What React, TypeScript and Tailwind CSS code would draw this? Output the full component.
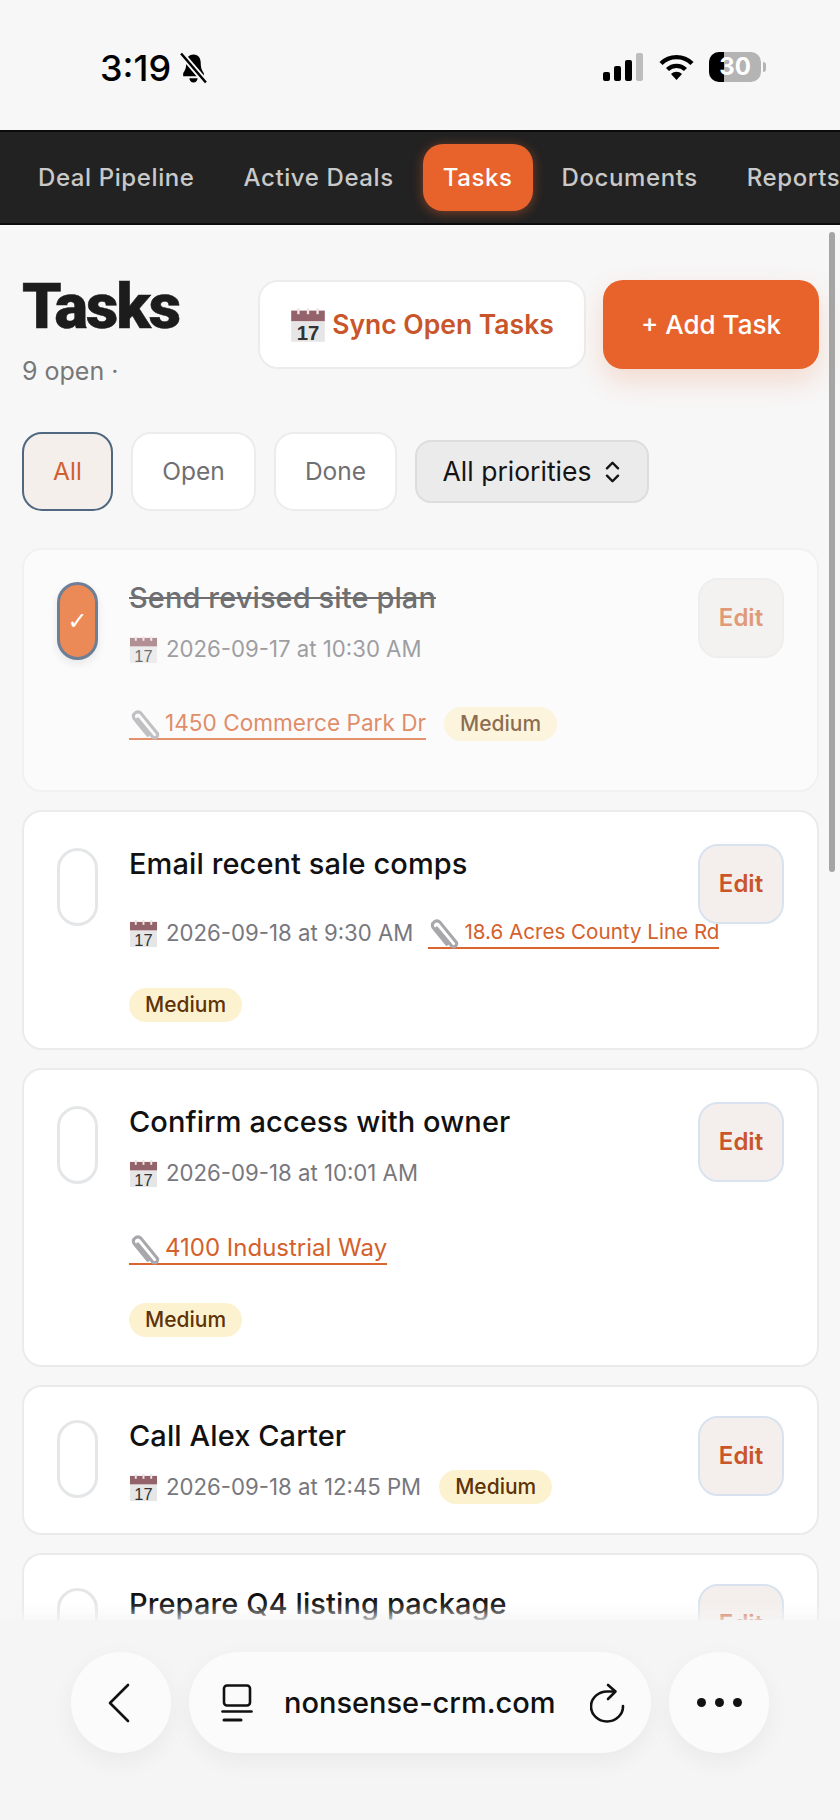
import React from "react";

function CalendarIcon({ large = false }: { large?: boolean }) {
  return (
    <svg viewBox="0 0 30 30" className={large ? "h-[36px] w-[36px] shrink-0" : "h-[29px] w-[29px] shrink-0"}>
      <rect x="1" y="3" width="28" height="9" fill="#94626a" />
      <rect x="1" y="12" width="28" height="17" fill="#e6e6e6" />
      <rect x="6" y="1" width="2" height="5" fill="#efe4e4" />
      <rect x="14" y="1" width="2" height="5" fill="#efe4e4" />
      <rect x="22" y="1" width="2" height="5" fill="#efe4e4" />
      <text x="15" y="27.5" textAnchor="middle" fontSize="17" fontFamily="Liberation Sans, sans-serif" fill="#333">
        17
      </text>
    </svg>
  );
}

function ClipIcon() {
  return (
    <svg viewBox="0 0 30 30" className="mt-[4px] h-[33px] w-[33px] shrink-0" fill="none">
      <path
        d="M8 9 L22 26 a3 3 0 0 0 4-3.5 L11 4 a4 4 0 0 0-6.5 4.5 L17 24"
        stroke="#a8a8ac"
        strokeWidth="2.8"
        strokeLinecap="round"
      />
    </svg>
  );
}

function Medium() {
  return (
    <span className="rounded-full bg-[#fdf2cf] px-[16px] py-[3px] text-[21px] leading-[28px] font-medium text-[#5f3208]">
      Medium
    </span>
  );
}

function DateText({ children }: { children: string }) {
  return (
    <span className="flex items-center gap-2 text-[22.2px] leading-[36px] whitespace-nowrap text-[#77777d]">
      <CalendarIcon />
      {children}
    </span>
  );
}

function PropLink({ children, size }: { children: string; size: string }) {
  return (
    <a className={`flex h-[32px] items-center gap-[3px] border-b-2 border-[#d9652f] whitespace-nowrap text-[#d4602c] ${size}`}>
      <ClipIcon />
      {children}
    </a>
  );
}

type Task = {
  title: string;
  done?: boolean;
  height: string;
  top: string;
  rows: React.ReactNode;
};

const tasks: Task[] = [
  {
    title: "Send revised site plan",
    done: true,
    height: "h-[244px]",
    top: "pt-[28px]",
    rows: (
      <>
        <div className="mt-[15px] flex">
          <DateText>2026-09-17 at 10:30 AM</DateText>
        </div>
        <div className="mt-[40px] flex items-center gap-[18px]">
          <PropLink size="text-[22.6px]">1450 Commerce Park Dr</PropLink>
          <Medium />
        </div>
      </>
    ),
  },
  {
    title: "Email recent sale comps",
    height: "h-[240px]",
    top: "pt-[32px]",
    rows: (
      <>
        <div className="mt-[33px] flex items-center gap-[15px]">
          <DateText>2026-09-18 at 9:30 AM</DateText>
          <PropLink size="text-[20.6px]">18.6 Acres County Line Rd</PropLink>
        </div>
        <div className="mt-[37px] flex">
          <Medium />
        </div>
      </>
    ),
  },
  {
    title: "Confirm access with owner",
    height: "h-[299px]",
    top: "pt-[32px]",
    rows: (
      <>
        <div className="mt-[15px] flex">
          <DateText>2026-09-18 at 10:01 AM</DateText>
        </div>
        <div className="mt-[42px] flex">
          <PropLink size="text-[24px]">4100 Industrial Way</PropLink>
        </div>
        <div className="mt-[38px] flex">
          <Medium />
        </div>
      </>
    ),
  },
  {
    title: "Call Alex Carter",
    height: "h-[150px]",
    top: "pt-[29px]",
    rows: (
      <div className="mt-[15px] flex items-center gap-[18px]">
        <DateText>2026-09-18 at 12:45 PM</DateText>
        <Medium />
      </div>
    ),
  },
  {
    title: "Prepare Q4 listing package",
    height: "h-[150px]",
    top: "pt-[29px]",
    rows: null,
  },
];

function TaskCard({ task }: { task: Task }) {
  return (
    <div
      className={`flex shrink-0 items-start rounded-[20px] border-2 pr-[33px] pl-[33px] ${task.height} ${task.top} ${
        task.done ? "border-[#f1f1f1] bg-[#fbfbfb]" : "border-[#ebebeb] bg-white"
      }`}
    >
      {task.done ? (
        <div className="mt-[4px] flex h-[78px] w-[41px] shrink-0 items-center justify-center rounded-full border-[3px] border-[#6d7f96] bg-[#ec8a57] font-['DejaVu_Sans',sans-serif] text-[24px] leading-none text-white shadow-[0_4px_10px_rgba(0,0,0,0.08)]">
          ✓
        </div>
      ) : (
        <div className="mt-[4px] h-[78px] w-[41px] shrink-0 rounded-full border-[3px] border-[#e4e6e8] bg-white" />
      )}
      <div className="ml-[31px] min-w-0 flex-1">
        <div
          className={`mt-[2px] text-[29px] leading-[36px] font-medium tracking-[0.1px] whitespace-nowrap ${
            task.done ? "text-[#6f6f72] line-through" : "text-[#111111]"
          }`}
        >
          {task.title}
        </div>
        <div className={task.done ? "opacity-70" : ""}>{task.rows}</div>
      </div>
      <button
        className={`flex h-[80px] w-[86px] shrink-0 items-center justify-center rounded-[20px] border-2 text-[24px] font-semibold ${
          task.done
            ? "border-[#eeeeee] bg-[#f4f2f1] text-[#e09a77]"
            : "border-[#d9e3ef] bg-[#f4efec] text-[#c9552a]"
        }`}
      >
        Edit
      </button>
    </div>
  );
}

function StatusBar() {
  return (
    <div className="flex h-[130px] shrink-0 items-start justify-between pt-[52px] pr-[74px] pl-[100px]">
      <div className="flex items-center gap-[7px]">
        <span className="text-[36px] leading-[32px] font-medium text-black">3:19</span>
        <svg viewBox="0 0 30 30" className="h-[32px] w-[31px]">
          <path
            d="M15 2c-5 0-7 4-7 8 0 5-1 7-3 10v3h20v-3c-2-3-3-5-3-10 0-4-2-8-7-8zM11 25h8a4 4 0 0 1-8 0z"
            fill="#000"
          />
          <path d="M3 1 L27 29" stroke="#f7f7f7" strokeWidth="6" />
          <path d="M3 1 L27 29" stroke="#000" strokeWidth="2.4" />
        </svg>
      </div>
      <div className="flex items-center gap-[15px]">
        <svg viewBox="0 0 41 28" className="h-[28px] w-[41px]">
          <rect x="0" y="19" width="7" height="9" rx="2" fill="#000" />
          <rect x="11" y="13" width="7" height="15" rx="2" fill="#000" />
          <rect x="22" y="7" width="7" height="21" rx="2" fill="#000" />
          <rect x="33" y="0" width="7" height="28" rx="2" fill="#bdbdbd" />
        </svg>
        <svg viewBox="0 0 35 26" className="h-[26px] w-[35px]">
          <path d="M2 9.5a22 22 0 0 1 31 0" stroke="#000" strokeWidth="4.4" fill="none" />
          <path d="M8.5 15.5a13 13 0 0 1 18 0" stroke="#000" strokeWidth="4.4" fill="none" />
          <path d="M12 20a8 8 0 0 1 11 0l-5.5 6z" fill="#000" />
        </svg>
        <div className="flex items-center">
          <div className="relative flex h-[30px] w-[52px] items-center justify-center overflow-hidden rounded-[10px] bg-[#b4b4b4]">
            <div className="absolute top-0 bottom-0 left-0 w-[15px] bg-black" />
            <span className="relative text-[24px] leading-none font-bold text-white">30</span>
          </div>
          <div className="ml-[2px] h-[10px] w-[3px] rounded-r-full bg-[#b4b4b4]" />
        </div>
      </div>
    </div>
  );
}

function TopNav() {
  const items = ["Deal Pipeline", "Active Deals", "Tasks", "Documents", "Reports"];
  return (
    <nav className="flex h-[95px] shrink-0 items-center gap-[9px] overflow-hidden border-y-2 border-[#0c0c0c] bg-[#222222] pl-[18px] text-[24px] font-medium tracking-[0.6px]">
      {items.map((item) =>
        item === "Tasks" ? (
          <div
            key={item}
            className="flex h-[67px] shrink-0 items-center rounded-[20px] bg-[#e8632c] px-[20px] text-white shadow-[0_2px_12px_rgba(232,99,44,0.45)]"
          >
            {item}
          </div>
        ) : (
          <div key={item} className="shrink-0 px-[20px] whitespace-nowrap text-[#c9c9c9]">
            {item}
          </div>
        ),
      )}
    </nav>
  );
}

function Filter({ label, width, active }: { label: string; width: string; active?: boolean }) {
  return (
    <button
      className={`h-[79px] rounded-[20px] border-2 text-[24.5px] ${width} ${
        active ? "border-[#4f6780] bg-[#f4efeb] text-[#d1602f]" : "border-[#ececec] bg-white text-[#6f6f72]"
      }`}
    >
      {label}
    </button>
  );
}

function BottomBar() {
  return (
    <div className="z-10 flex h-[200px] shrink-0 items-start gap-[18px] bg-[#f5f5f5] pt-[32px] pl-[71px] shadow-[0_-6px_14px_rgba(245,245,245,0.9)]">
      <div className="flex h-[101px] w-[100px] items-center justify-center rounded-full bg-[#fbfbfb] shadow-[0_8px_24px_rgba(0,0,0,0.05)]">
        <svg viewBox="0 0 24 40" className="mr-[4px] h-[40px] w-[24px]" fill="none">
          <path d="M21 2 L3 20 L21 38" stroke="#111" strokeWidth="2.6" strokeLinecap="round" strokeLinejoin="round" />
        </svg>
      </div>
      <div className="flex h-[101px] w-[462px] items-center rounded-full bg-[#fbfbfb] pl-[32px] shadow-[0_8px_24px_rgba(0,0,0,0.05)]">
        <svg viewBox="0 0 32 38" className="h-[38px] w-[32px] shrink-0" fill="none" stroke="#111" strokeWidth="2.6" strokeLinecap="round">
          <rect x="3" y="1.5" width="26" height="20" rx="3" />
          <path d="M1.5 27.5 H30.5" />
          <path d="M3 36 H20" strokeWidth="3" />
        </svg>
        <span className="ml-[31px] text-[29px] font-medium whitespace-nowrap text-[#111]">nonsense-crm.com</span>
        <svg viewBox="18 10 36 40" className="ml-[35px] h-[40px] w-[36px] shrink-0" fill="none" stroke="#111" strokeWidth="2.6" strokeLinecap="round" strokeLinejoin="round">
          <path d="M51 33 A16 15 0 1 1 36 18.5 L43 18.5" />
          <path d="M36 12 L43.5 18.5 L36 26" />
        </svg>
      </div>
      <div className="flex h-[101px] w-[100px] items-center justify-center gap-[9px] rounded-full bg-[#fbfbfb] shadow-[0_8px_24px_rgba(0,0,0,0.05)]">
        <div className="h-[9px] w-[9px] rounded-full bg-[#111]" />
        <div className="h-[9px] w-[9px] rounded-full bg-[#111]" />
        <div className="h-[9px] w-[9px] rounded-full bg-[#111]" />
      </div>
    </div>
  );
}

export default function App() {
  return (
    <div className="flex h-[1820px] w-[840px] flex-col overflow-hidden bg-[#f7f7f7] font-['Inter',sans-serif]">
      <StatusBar />
      <TopNav />
      <main className="relative min-h-0 flex-1 overflow-hidden pt-[55px] pl-[22px]">
        {/* scroll thumb */}
        <div className="absolute top-[7px] right-[5px] h-[640px] w-[6px] rounded-full bg-[#a5a5a5]" />

        <div className="flex items-start">
          <div className="w-[236px]">
            <h1 className="-mt-[4px] font-['Roboto',sans-serif] text-[63px] leading-[62px] font-black tracking-[-2px] text-[#1c1c1c] [-webkit-text-stroke:0.5px_#1c1c1c]">
              Tasks
            </h1>
            <p className="mt-[17px] text-[25px] leading-[32px] text-[#77777a]">9 open ·</p>
          </div>
          <button className="flex h-[89px] w-[328px] items-center justify-center gap-[6px] rounded-[20px] border-2 border-[#ececec] bg-white text-[26.5px] font-semibold text-[#c9552a]">
            <CalendarIcon large />
            Sync Open Tasks
          </button>
          <button className="ml-[17px] h-[89px] w-[216px] rounded-[20px] bg-[#e8632c] text-[26px] font-medium text-white shadow-[0_12px_28px_rgba(232,99,44,0.2)]">
            + Add Task
          </button>
        </div>

        <div className="mt-[45px] flex items-center gap-[18px]">
          <Filter label="All" width="w-[91px]" active />
          <Filter label="Open" width="w-[125px]" />
          <Filter label="Done" width="w-[123px]" />
          <div className="flex h-[63px] w-[234px] items-center justify-center gap-[13px] rounded-[16px] border-2 border-[#dddddd] bg-[#ebebeb] text-[26.5px] text-[#141414]">
            All priorities
            <svg viewBox="0 0 18 26" className="h-[24px] w-[17px]" fill="none" stroke="#141414" strokeWidth="2.6" strokeLinecap="round" strokeLinejoin="round">
              <path d="M3 9 L9 3 L15 9" />
              <path d="M3 17 L9 23 L15 17" />
            </svg>
          </div>
        </div>

        <div className="mt-[37px] flex w-[797px] flex-col gap-[18px]">
          {tasks.map((task) => (
            <TaskCard key={task.title} task={task} />
          ))}
        </div>
      </main>
      <BottomBar />
    </div>
  );
}
